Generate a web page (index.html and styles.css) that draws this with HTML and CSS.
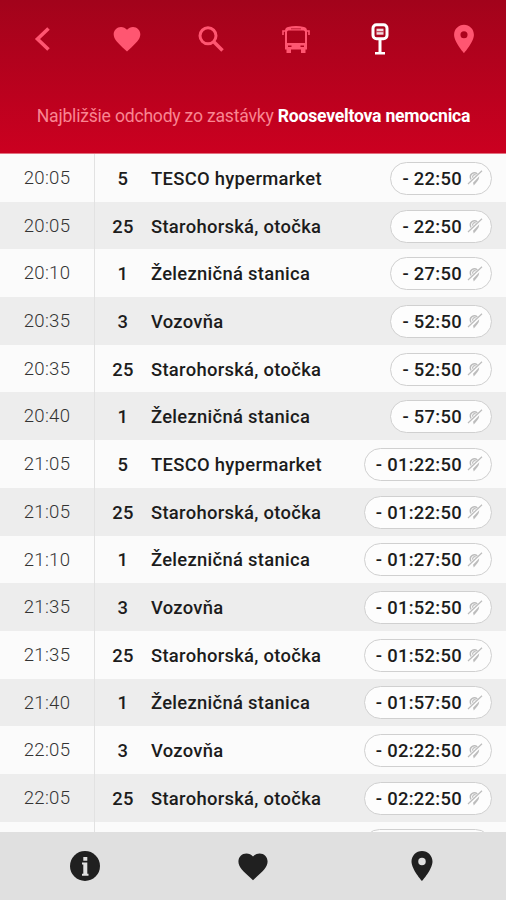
FILE: index.html
```html
<!DOCTYPE html>
<html lang="sk">
<head>
  <meta charset="UTF-8" />
  <meta name="viewport" content="width=device-width, initial-scale=1.0" />
  <title>Odchody zo zastávky</title>
  <link rel="stylesheet" href="styles.css">
</head>
<body>

  <!-- Ikony -->
  <svg class="sprite">
    <symbol id="heart" viewBox="0 0 24 24">
      <path d="M12 21.35l-1.45-1.32C5.4 15.36 2 12.28 2 8.5 2 5.42 4.42 3 7.5 3c1.74 0 3.41.81 4.5 2.09C13.09 3.81 14.76 3 16.5 3 19.58 3 22 5.42 22 8.5c0 3.78-3.4 6.86-8.55 11.54L12 21.35z" />
    </symbol>
    <symbol id="pin" viewBox="0 0 24 24">
      <path d="M12 2C8.13 2 5 5.13 5 9c0 5.25 7 13 7 13s7-7.75 7-13c0-3.87-3.13-7-7-7zm0 9.5a2.5 2.5 0 0 1 0-5 2.5 2.5 0 0 1 0 5z" />
    </symbol>
    <symbol id="no-gps" viewBox="0 0 16 16">
      <path d="M4 9.500Q2.200 5.500 5 3.600Q7.800 1.800 10.300 4" fill="none" stroke="currentColor" stroke-width="1.500" />
      <path d="M6 7.800a2 2 0 0 1 2.700-2.800" fill="none" stroke="currentColor" stroke-width="1.200" />
      <path d="M1 14L15 .8" fill="none" stroke="currentColor" stroke-width="1.200" />
      <path d="M6 12.800L12.300 6.200Q12.300 8.500 10.500 11L6.800 15.500z" />
    </symbol>
  </svg>

  <header>
    <nav class="top-nav">
      <a><svg class="icon" viewBox="0 0 28 28"><path d="M19.500 3.500L8.500 14l11 10.500" fill="none" stroke="currentColor" stroke-width="3.600" /></svg></a>
      <a><svg class="icon heart"><use href="#heart" /></svg></a>
      <a><svg class="icon" viewBox="0 0 28 28"><g fill="none" stroke="currentColor"><circle cx="11" cy="10.800" r="8" stroke-width="3" /><path d="M16.500 16.500l9 9" stroke-width="3.600" /></g></svg></a>
      <a>
        <svg class="icon" viewBox="0 0 28 28">
          <path fill-rule="evenodd" d="M6 2Q14 0 22 2Q25 2.500 25 6V24.500H23.500V28H19V24.500H9V28H4.500V24.500H3V6Q3 2.500 6 2zM6.500 5.500Q5 5.500 5 7V18H23V7Q23 5.500 21.500 5.500zM6 20.500V22H9.500V20.500zM18.500 20.500V22H22V20.500z" />
          <path d="M3.500 6H1V10M24.500 6H27V10" fill="none" stroke="currentColor" stroke-width="1.600" />
          <path d="M9 3.800h10" stroke="#a8051f" stroke-width=".7" />
        </svg>
      </a>
      <a class="active">
        <svg class="icon stop" viewBox="0 0 28 32">
          <rect x="7" y="1.800" width="14" height="14" rx="3.500" fill="none" stroke="currentColor" stroke-width="3" />
          <path d="M10.500 5.700h7v6h-7z" opacity=".85" />
          <path d="M10.500 8.700h7" stroke="#a8051f" stroke-width=".8" />
          <path d="M12.500 16h3v13H19v2.500H9V29h3.500z" />
        </svg>
      </a>
      <a><svg class="icon pin"><use href="#pin" /></svg></a>
    </nav>
    <p class="stop-title">Najbližšie odchody zo zastávky <strong>Rooseveltova nemocnica</strong></p>
  </header>

  <main id="odchody"></main>

  <footer>
    <a><svg class="icon info" viewBox="0 0 30 30"><circle cx="15" cy="15" r="15" /><path d="M13.300 6h4v3.800h-4zM12 11.500h5.300v11.200h1.200V24.800h-6.500V22.700h1.300v-9.200H12z" fill="#e0e0e0" /></svg></a>
    <a><svg class="icon heart"><use href="#heart" /></svg></a>
    <a><svg class="icon pin"><use href="#pin" /></svg></a>
  </footer>

  <script>
    const odchody = [
      ["20:05", 5, "TESCO hypermarket", "- 22:50"],
      ["20:05", 25, "Starohorská, otočka", "- 22:50"],
      ["20:10", 1, "Železničná stanica", "- 27:50"],
      ["20:35", 3, "Vozovňa", "- 52:50"],
      ["20:35", 25, "Starohorská, otočka", "- 52:50"],
      ["20:40", 1, "Železničná stanica", "- 57:50"],
      ["21:05", 5, "TESCO hypermarket", "- 01:22:50"],
      ["21:05", 25, "Starohorská, otočka", "- 01:22:50"],
      ["21:10", 1, "Železničná stanica", "- 01:27:50"],
      ["21:35", 3, "Vozovňa", "- 01:52:50"],
      ["21:35", 25, "Starohorská, otočka", "- 01:52:50"],
      ["21:40", 1, "Železničná stanica", "- 01:57:50"],
      ["22:05", 3, "Vozovňa", "- 02:22:50"],
      ["22:05", 25, "Starohorská, otočka", "- 02:22:50"],
      ["", "", "", ""]
    ];

    document.getElementById("odchody").innerHTML = odchody.map(([cas, linka, smer, zostava]) => `
      <div class="row">
        <div class="time">${cas}</div>
        <div class="line">${linka}</div>
        <div class="direction">${smer}</div>
        <div class="countdown"><span>${zostava}</span><svg><use href="#no-gps" /></svg></div>
      </div>
    `).join('');
  </script>
</body>
</html>
```
FILE: styles.css
```css
* {
  box-sizing: border-box;
}

body {
  margin: 0;
  height: 100vh;
  display: flex;
  flex-direction: column;
  overflow: hidden;
  font-family: Roboto, sans-serif;
  background-color: #fbfbfb;
  color: #1c1c1c;
}

.sprite {
  display: none;
}

.icon {
  display: block;
  width: 28px;
  height: 28px;
  fill: currentColor;
}

header {
  flex: none;
  height: 154px;
  background: linear-gradient(#a2031b, #cb0020);
  border-bottom: 1px solid #e2707f;
}

.top-nav {
  display: flex;
  height: 78px;
  padding-left: 1px;
  color: #ff5671;
}

.top-nav a,
footer a {
  flex: 1;
  display: flex;
  align-items: center;
  justify-content: center;
}

.top-nav .active {
  color: #fff;
}

.top-nav .heart {
  width: 34px;
  height: 32px;
}

.top-nav .stop {
  height: 32px;
}

.top-nav .pin {
  width: 34px;
  height: 34px;
}

.stop-title {
  margin: 0;
  padding: 26px 0 0 1px;
  font-size: 17.6px;
  line-height: 24px;
  letter-spacing: -0.22px;
  text-align: center;
  white-space: nowrap;
  color: #f98592;
}

.stop-title strong {
  font-weight: 700;
  color: #fff;
}

main {
  flex: 1;
  min-height: 0;
  overflow: hidden;
}

.row {
  display: flex;
  align-items: center;
  height: 47.69px;
  padding-right: 14px;
  font-size: 18.4px;
  font-weight: 500;
  letter-spacing: 0.3px;
}

.row:nth-child(even) {
  background-color: #ededed;
}

.time {
  width: 95px;
  height: 100%;
  border-right: 1px solid #e2e2e2;
  line-height: 48px;
  text-align: center;
  font-size: 18.6px;
  font-weight: 300;
  color: #333;
}

.line {
  width: 56px;
  padding-top: 1px;
  text-align: center;
}

.direction {
  flex: 1;
  padding-top: 1px;
}

.countdown {
  display: flex;
  align-items: center;
  justify-content: flex-end;
  height: 33px;
  margin-top: 1px;
  padding: 0 8px 0 11px;
  border: 1px solid #d0d0d0;
  border-radius: 17px;
  background-color: #fdfdfd;
}

.row:last-child .countdown {
  width: 129px;
}

.countdown svg {
  width: 16px;
  height: 16px;
  margin-left: 5px;
  color: #bcbcbc;
  fill: currentColor;
}

footer {
  flex: none;
  display: flex;
  height: 68px;
  padding-left: 1px;
  background-color: #e0e0e0;
  color: #202020;
}

footer .info {
  width: 30px;
  height: 30px;
}

footer .heart {
  width: 36px;
  height: 35px;
}

footer .pin {
  width: 36px;
  height: 36px;
}
```
